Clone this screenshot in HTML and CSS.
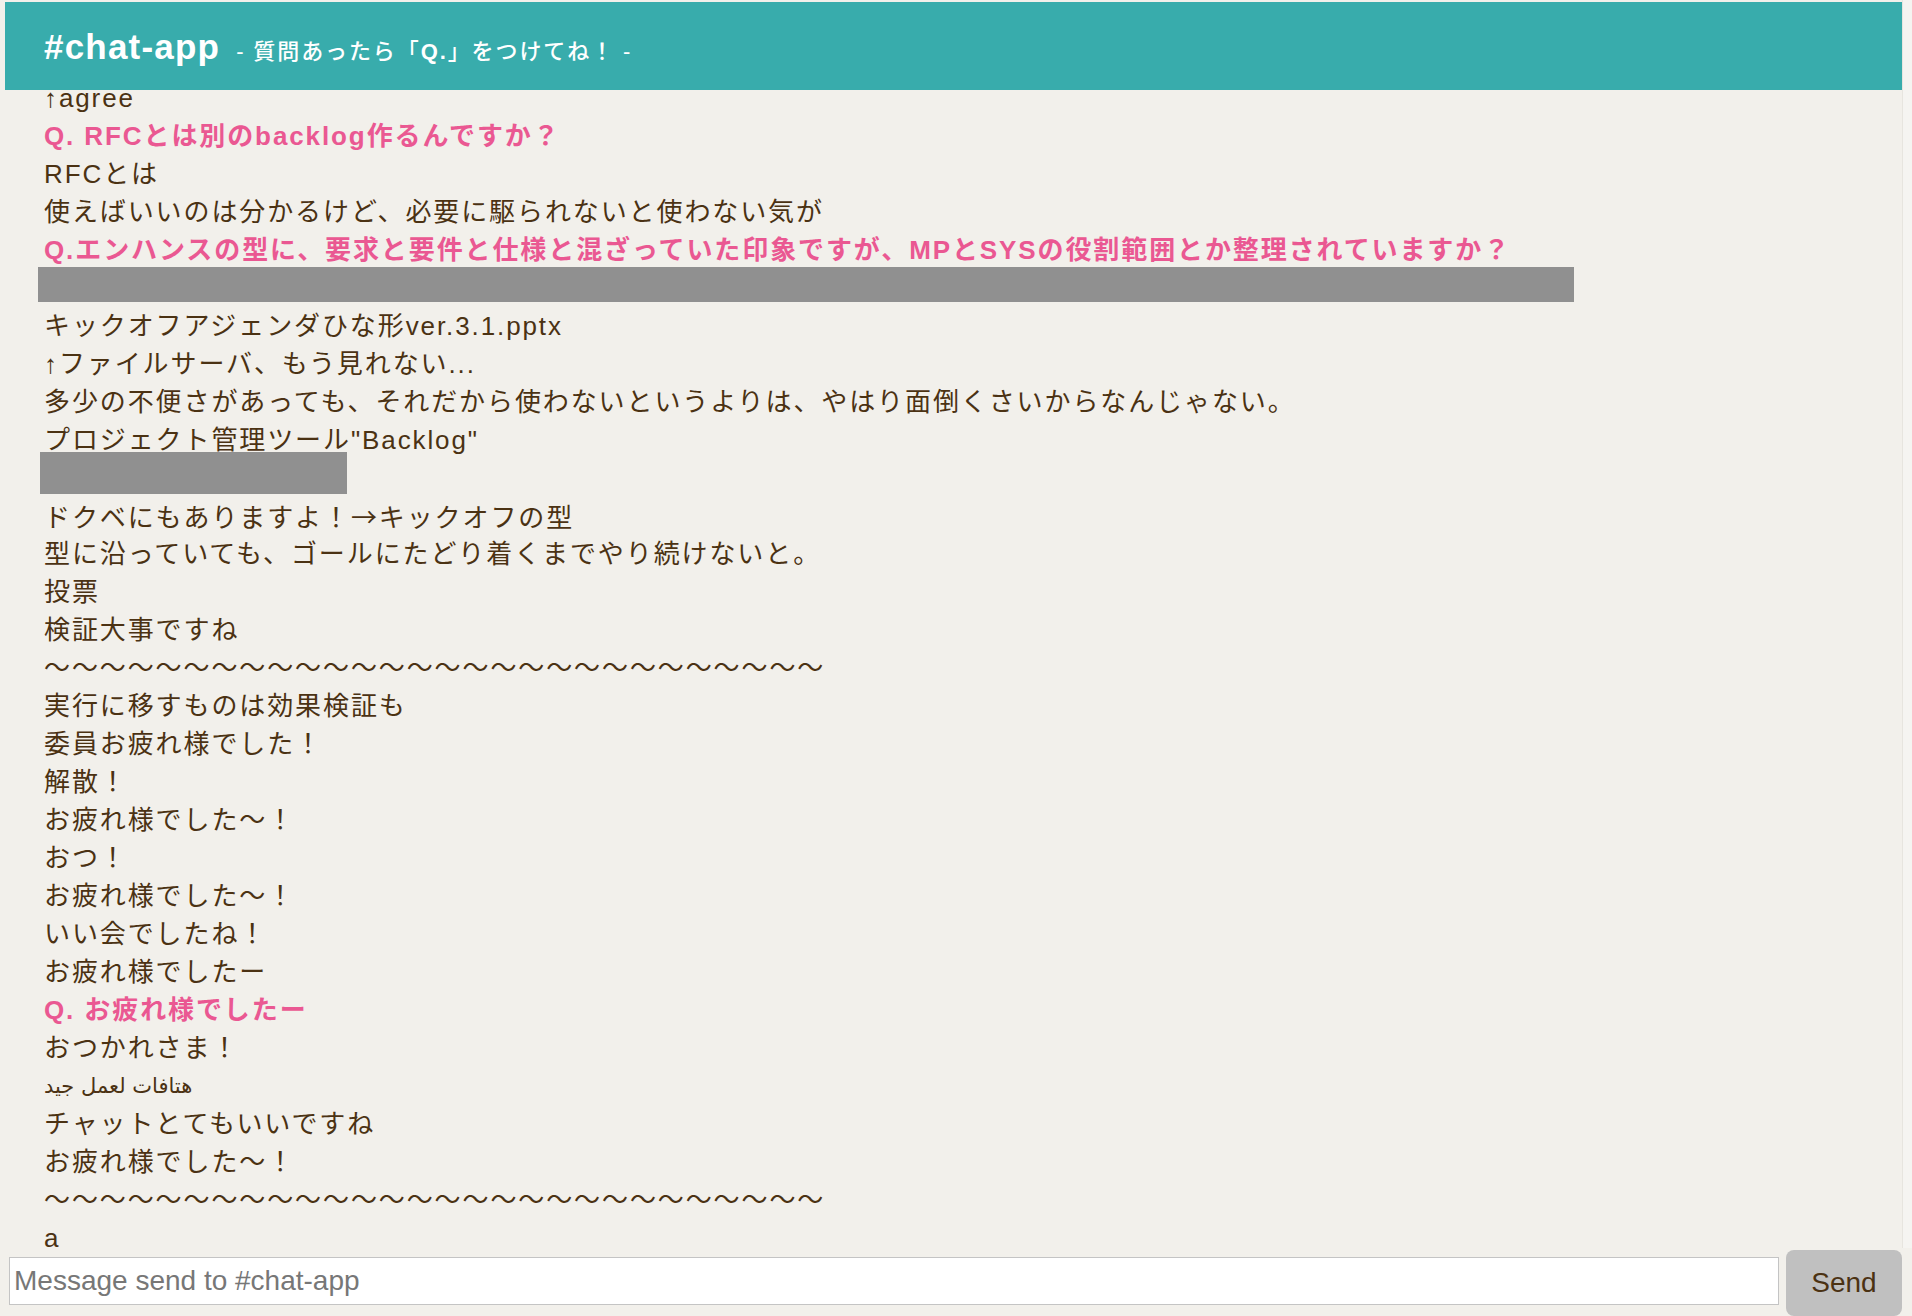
FILE: index.html
```html
<!DOCTYPE html>
<html lang="ja">
<head>
<meta charset="utf-8">
<title>#chat-app</title>
<link rel="stylesheet" href="styles.css">
</head>
<body>
<div class="app">
  <div class="main">
    <div class="channel">
      <header class="header">
        <h1 class="title">#chat-app</h1>
        <span class="topic">- 質問あったら「<b>Q.</b>」をつけてね！ -</span>
      </header>
      <div class="messages">
        <div class="msg">↑agree</div>
        <div class="msg q">Q. RFCとは別のbacklog作るんですか？</div>
        <div class="msg">RFCとは</div>
        <div class="msg">使えばいいのは分かるけど、必要に駆られないと使わない気が</div>
        <div class="msg q">Q.エンハンスの型に、要求と要件と仕様と混ざっていた印象ですが、MPとSYSの役割範囲とか整理されていますか？</div>
        <div class="msg"><div class="attach attach-wide"></div></div>
        <div class="msg">キックオフアジェンダひな形ver.3.1.pptx</div>
        <div class="msg">↑ファイルサーバ、もう見れない...</div>
        <div class="msg">多少の不便さがあっても、それだから使わないというよりは、やはり面倒くさいからなんじゃない。</div>
        <div class="msg">プロジェクト管理ツール"Backlog"</div>
        <div class="msg"><div class="attach attach-small"></div></div>
        <div class="msg">ドクベにもありますよ！<span class="cjk">→</span>キックオフの型</div>
        <div class="msg">型に沿っていても、ゴールにたどり着くまでやり続けないと。</div>
        <div class="msg">投票</div>
        <div class="msg">検証大事ですね</div>
        <div class="msg">〜〜〜〜〜〜〜〜〜〜〜〜〜〜〜〜〜〜〜〜〜〜〜〜〜〜〜〜</div>
        <div class="msg">実行に移すものは効果検証も</div>
        <div class="msg">委員お疲れ様でした！</div>
        <div class="msg">解散！</div>
        <div class="msg">お疲れ様でした〜！</div>
        <div class="msg">おつ！</div>
        <div class="msg">お疲れ様でした〜！</div>
        <div class="msg">いい会でしたね！</div>
        <div class="msg">お疲れ様でしたー</div>
        <div class="msg q">Q. お疲れ様でしたー</div>
        <div class="msg">おつかれさま！</div>
        <div class="msg arabic">هتافات لعمل جيد</div>
        <div class="msg">チャットとてもいいですね</div>
        <div class="msg">お疲れ様でした〜！</div>
        <div class="msg">〜〜〜〜〜〜〜〜〜〜〜〜〜〜〜〜〜〜〜〜〜〜〜〜〜〜〜〜</div>
        <div class="msg">a</div>
      </div>
    </div>
    <div class="scroll-track"></div>
  </div>
  <form class="composer">
    <input class="composer-input" type="text" placeholder="Message send to #chat-app">
    <button class="send" type="button">Send</button>
  </form>
</div>
</body>
</html>
```

FILE: styles.css
```css
html, body {
  margin: 0;
  padding: 0;
  height: 100%;
}

body {
  background: #f2f0eb;
  color: #4b3213;
  font-family: "Liberation Sans", "Noto Sans CJK JP", sans-serif;
  overflow: hidden;
}

.app {
  height: 100vh;
  display: flex;
  flex-direction: column;
}

.main {
  flex: 1;
  min-height: 0;
  display: flex;
  padding-left: 5px;
}

.channel {
  flex: 1;
  min-width: 0;
  display: flex;
  flex-direction: column;
  padding-top: 2px;
}

.header {
  flex: none;
  height: 88px;
  box-sizing: border-box;
  background: #38acac;
  color: #ffffff;
  display: flex;
  align-items: baseline;
  padding: 24px 0 0 39px;
  gap: 16px;
}

.title {
  margin: 0;
  font-size: 35px;
  line-height: 42px;
  font-weight: bold;
  letter-spacing: 1.2px;
}

.topic {
  font-size: 22px;
  line-height: 30px;
  letter-spacing: 1.9px;
  font-weight: 500;
  font-family: "Liberation Sans", "Noto Sans CJK JP", sans-serif;
}

.topic b {
  font-weight: bold;
}

.messages {
  flex: 1;
  min-height: 0;
  overflow: hidden;
  display: flex;
  flex-direction: column;
  justify-content: flex-end;
  padding-left: 39px;
}

.msg {
  flex: none;
  font-size: 26px;
  line-height: 38px;
  height: 38px;
  letter-spacing: 1.9px;
  white-space: nowrap;
}

.msg.q {
  color: #ea5892;
  font-weight: bold;
}

.msg .cjk {
  font-family: "Noto Sans CJK JP", sans-serif;
}

.msg.arabic {
  font-family: "DejaVu Sans", sans-serif;
  font-size: 21px;
  letter-spacing: 0;
}

.attach {
  background: #909090;
}

.attach-wide {
  width: 1536px;
  height: 35px;
  margin: -2px 0 5px -6px;
}

.attach-small {
  width: 307px;
  height: 42px;
  margin: -7px 0 3px -4px;
}

.scroll-track {
  flex: none;
  width: 9px;
  margin-bottom: 9px;
  background: #f5f4f1;
  border-left: 1px solid #e7e5df;
}

.composer {
  flex: none;
  height: 59px;
  display: flex;
  align-items: flex-start;
  gap: 7px;
  margin: 0;
  padding: 0 10px 0 9px;
}

.composer-input {
  flex: 1;
  min-width: 0;
  height: 48px;
  box-sizing: border-box;
  border: 1px solid #c4c4c4;
  background: #ffffff;
  padding: 0 4px;
  font-family: "Liberation Sans", "Noto Sans CJK JP", sans-serif;
  font-size: 28px;
  color: #4b3213;
  outline: none;
}

.composer-input::placeholder {
  color: #777777;
}

.send {
  flex: none;
  width: 116px;
  height: 66px;
  margin-top: -7px;
  border: none;
  border-radius: 8px;
  background: #c0c0c0;
  color: #4b3213;
  font-family: "Liberation Sans", sans-serif;
  font-size: 28px;
  padding: 0;
}
```
